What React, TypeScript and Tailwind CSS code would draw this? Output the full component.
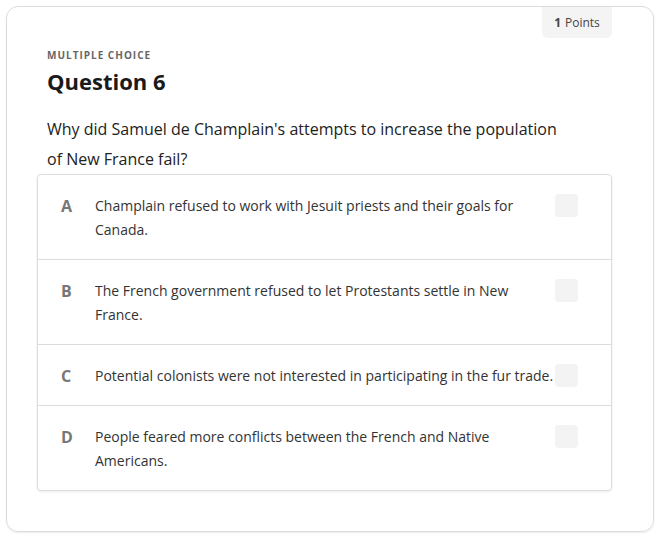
import React from 'react';

const options = [
  { letter: 'A', text: 'Champlain refused to work with Jesuit priests and their goals for Canada.' },
  { letter: 'B', text: 'The French government refused to let Protestants settle in New France.' },
  { letter: 'C', text: 'Potential colonists were not interested in participating in the fur trade.' },
  { letter: 'D', text: 'People feared more conflicts between the French and Native Americans.' },
];

const App: React.FC = () => {
  return (
    <div className="w-[666px] h-[534px] bg-white pt-[6px] overflow-hidden" style={{ fontFamily: '"Open Sans", sans-serif' }}>
      <div className="ml-[6px] w-[648px] h-[526px] rounded-[12px] border border-[#dcdcdc] shadow-[0_1px_2px_rgba(0,0,0,0.08)] relative">
        <div className="absolute top-0 right-[41px] bg-[#f4f4f4] rounded-b-[6px] h-[31px] w-[70px] flex items-center justify-center text-[12px] text-[#444]">
          <span className="font-bold mr-[4px]">1</span>Points
        </div>
        <div className="pt-[41px] pl-[40px] pr-[41px]">
          <div className="text-[10px] font-bold tracking-[0.1em] text-[#666] leading-[14px]">MULTIPLE CHOICE</div>
          <h2 className="mt-[4px] text-[22px] font-bold text-[#1a1a1a] leading-[30px]">Question 6</h2>
          <p className="mt-[18px] text-[16px] text-[#222] leading-[30px] pr-[40px]">
            Why did Samuel de Champlain's attempts to increase the population of New France fail?
          </p>
        </div>
        <div className="ml-[30px] mr-[41px] border border-[#dcdcdc] rounded-[4px] shadow-[0_1px_3px_rgba(0,0,0,0.08)]">
          {options.map((o, i) => (
            <div key={o.letter} className={`flex items-start pt-[19px] pb-[17px] pl-[23px] pr-[33px] ${i > 0 ? 'border-t border-[#dcdcdc]' : ''}`}>
              <div className="w-[34px] shrink-0 text-[16px] font-bold text-[#777] leading-[24px]">{o.letter}</div>
              <div className="flex-1 text-[14px] text-[#333] leading-[24px]">{o.text}</div>
              <div className="w-[23px] h-[23px] shrink-0 rounded-[4px] bg-[#f3f3f3]" />
            </div>
          ))}
        </div>
      </div>
    </div>
  );
};

export default App;
